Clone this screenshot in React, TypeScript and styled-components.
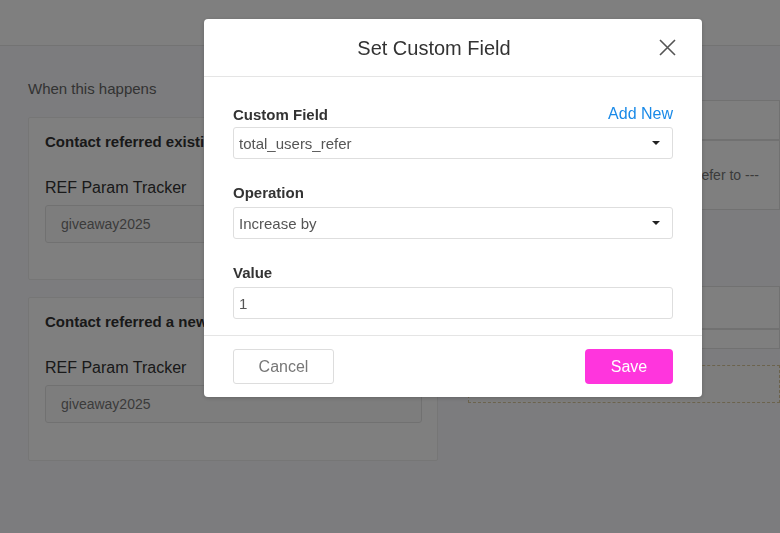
import React from "react";
import styled, { createGlobalStyle } from "styled-components";

const Global = createGlobalStyle`
  html, body { margin: 0; padding: 0; }
  body { font-family: "Liberation Sans", Arial, sans-serif; background: #f8f9fc; width: 780px; height: 533px; overflow: hidden; }
  * { box-sizing: border-box; }
`;

const Page = styled.div`
  width: 780px;
  height: 533px;
  display: flex;
  flex-direction: column;
  background: #f8f9fc;
`;

const TopBar = styled.div`
  height: 46px;
  flex: none;
  background: #ffffff;
  border-bottom: 1px solid #e6e6e6;
`;

const Content = styled.div`
  display: flex;
  gap: 30px;
  padding: 34px 0 0 28px;
`;

const LeftCol = styled.div`
  width: 410px;
  flex: none;
  display: flex;
  flex-direction: column;
`;

const SectionTitle = styled.div`
  font-size: 15px;
  color: #666;
  line-height: 18px;
  margin-bottom: 19px;
`;

const Card = styled.div<{ h: number }>`
  background: #ffffff;
  border: 1px solid #ececec;
  border-radius: 2px;
  padding: 15px 15px 0 16px;
  margin-bottom: 17px;
  height: ${(p) => p.h}px;
  overflow: hidden;
`;

const CardTitle = styled.div`
  font-size: 15px;
  font-weight: bold;
  color: #333;
  line-height: 18px;
  white-space: nowrap;
  margin-bottom: 27px;
`;

const CardLabel = styled.div`
  font-size: 16px;
  color: #333;
  line-height: 19px;
  margin-bottom: 8px;
`;

const TrackerInput = styled.div`
  height: 38px;
  border: 1px solid #e3e3e3;
  border-radius: 3px;
  background: #fbfbfb;
  padding: 0 15px;
  display: flex;
  align-items: center;
  font-size: 14px;
  color: #777;
`;

const RightCol = styled.div`
  flex: 1;
  display: flex;
  flex-direction: column;
  margin-top: 20px;
`;

const RBox = styled.div<{ h: number; mt?: number }>`
  height: ${(p) => p.h}px;
  margin-top: ${(p) => p.mt ?? 0}px;
  background: #ffffff;
  border: 1px solid #e2e2e2;
  display: flex;
  align-items: center;
  justify-content: flex-end;
  padding-right: 20px;
  font-size: 14px;
  color: #777;
`;

const DashedBox = styled.div`
  height: 38px;
  margin-top: 16px;
  border: 1px dashed #d8c79a;
  background: #fafafa;
`;

const Overlay = styled.div`
  position: fixed;
  inset: 0;
  background: rgba(0, 0, 0, 0.5);
  padding: 19px 0 0 204px;
`;

const Modal = styled.div`
  width: 498px;
  background: #ffffff;
  border-radius: 4px;
  box-shadow: 0 1px 4px rgba(0, 0, 0, 0.2);
`;

const ModalHeader = styled.div`
  height: 58px;
  display: flex;
  align-items: center;
  padding: 0 16px;
  border-bottom: 1px solid #e5e5e5;
`;

const ModalTitle = styled.div`
  flex: 1;
  text-align: center;
  font-size: 20px;
  color: #333;
  padding-top: 2px;
`;

const CloseBtn = styled.button`
  width: 38px;
  height: 38px;
  border: none;
  background: transparent;
  padding: 0;
  display: flex;
  align-items: center;
  justify-content: center;
  cursor: pointer;
`;

const ModalBody = styled.div`
  padding: 28px 29px 16px 29px;
  display: flex;
  flex-direction: column;
`;

const Field = styled.div<{ mt?: number }>`
  margin-top: ${(p) => p.mt ?? 0}px;
  display: flex;
  flex-direction: column;
`;

const LabelRow = styled.div<{ gap: number }>`
  display: flex;
  justify-content: space-between;
  align-items: flex-end;
  margin-bottom: ${(p) => p.gap}px;
`;

const Label = styled.label`
  font-size: 15px;
  font-weight: bold;
  color: #333;
  line-height: 17px;
`;

const AddNew = styled.a`
  font-size: 16px;
  color: #1a8ae8;
  line-height: 18px;
  text-decoration: none;
  cursor: pointer;
`;

const Control = styled.div`
  height: 32px;
  border: 1px solid #dedede;
  border-radius: 3px;
  display: flex;
  align-items: center;
  padding: 0 12px 0 5px;
  font-size: 15px;
  color: #555;
  background: #fff;
`;

const ControlText = styled.span`
  flex: 1;
  padding-top: 1px;
`;

const Caret = styled.span`
  width: 0;
  height: 0;
  border-left: 4px solid transparent;
  border-right: 4px solid transparent;
  border-top: 4px solid #222;
`;

const ModalFooter = styled.div`
  border-top: 1px solid #e5e5e5;
  padding: 13px 29px 13px 29px;
  display: flex;
  justify-content: space-between;
`;

const CancelBtn = styled.button`
  width: 101px;
  height: 35px;
  border: 1px solid #dddddd;
  border-radius: 3px;
  background: #fff;
  font-family: "Liberation Sans", Arial, sans-serif;
  font-size: 16px;
  color: #777;
  cursor: pointer;
`;

const SaveBtn = styled.button`
  width: 88px;
  height: 35px;
  border: none;
  border-radius: 4px;
  background: #ff35dd;
  font-family: "Liberation Sans", Arial, sans-serif;
  font-size: 16px;
  color: #ffffff;
  cursor: pointer;
`;

export default function App() {
  return (
    <>
      <Global />
      <Page>
        <TopBar />
        <Content>
          <LeftCol>
            <SectionTitle>When this happens</SectionTitle>
            <Card h={163}>
              <CardTitle>Contact referred existing contact</CardTitle>
              <CardLabel>REF Param Tracker</CardLabel>
              <TrackerInput>giveaway2025</TrackerInput>
            </Card>
            <Card h={164}>
              <CardTitle>Contact referred a new contact</CardTitle>
              <CardLabel>REF Param Tracker</CardLabel>
              <TrackerInput>giveaway2025</TrackerInput>
            </Card>
          </LeftCol>
          <RightCol>
            <RBox h={40} />
            <RBox h={70}>--- Select what to refer to ---</RBox>
            <RBox h={43} mt={76} />
            <RBox h={20} />
            <DashedBox />
          </RightCol>
        </Content>
      </Page>
      <Overlay>
        <Modal>
          <ModalHeader>
            <ModalTitle>Set Custom Field</ModalTitle>
            <CloseBtn aria-label="Close">
              <svg width="17" height="17" viewBox="0 0 17 17">
                <path d="M1 1 L16 16 M16 1 L1 16" stroke="#555" strokeWidth="1.6" fill="none" />
              </svg>
            </CloseBtn>
          </ModalHeader>
          <ModalBody>
            <Field>
              <LabelRow gap={4}>
                <Label>Custom Field</Label>
                <AddNew>Add New</AddNew>
              </LabelRow>
              <Control>
                <ControlText>total_users_refer</ControlText>
                <Caret />
              </Control>
            </Field>
            <Field mt={25}>
              <LabelRow gap={6}>
                <Label>Operation</Label>
              </LabelRow>
              <Control>
                <ControlText>Increase by</ControlText>
                <Caret />
              </Control>
            </Field>
            <Field mt={25}>
              <LabelRow gap={6}>
                <Label>Value</Label>
              </LabelRow>
              <Control>
                <ControlText>1</ControlText>
              </Control>
            </Field>
          </ModalBody>
          <ModalFooter>
            <CancelBtn>Cancel</CancelBtn>
            <SaveBtn>Save</SaveBtn>
          </ModalFooter>
        </Modal>
      </Overlay>
    </>
  );
}
